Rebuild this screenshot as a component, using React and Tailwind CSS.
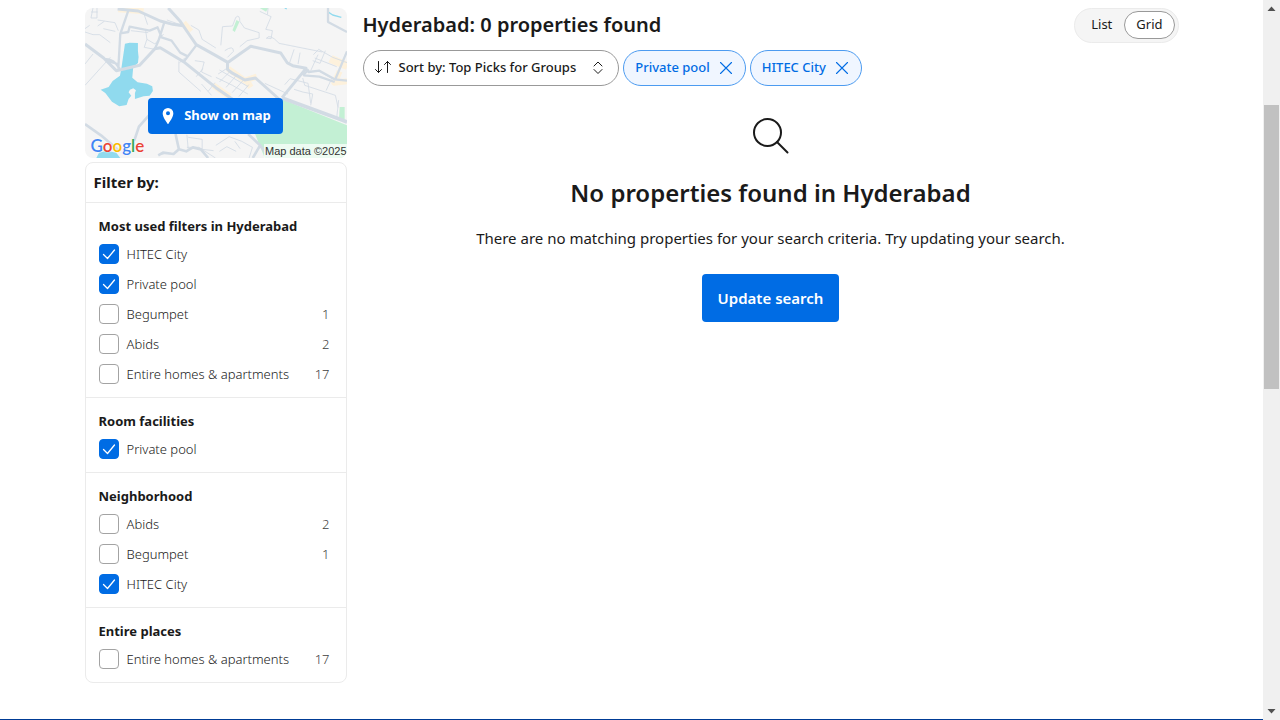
import React, { useState } from "react";

const FILTERS = [
  {
    title: "Most used filters in Hyderabad",
    items: [
      { name: "HITEC City", on: true },
      { name: "Private pool", on: true },
      { name: "Begumpet", count: 1 },
      { name: "Abids", count: 2 },
      { name: "Entire homes & apartments", count: 17 },
    ],
  },
  { title: "Room facilities", items: [{ name: "Private pool", on: true }] },
  {
    title: "Neighborhood",
    items: [
      { name: "Abids", count: 2 },
      { name: "Begumpet", count: 1 },
      { name: "HITEC City", on: true },
    ],
  },
  { title: "Entire places", items: [{ name: "Entire homes & apartments", count: 17 }] },
];

function MapDrawing() {
  return (
    <svg
      viewBox="0 0 787 450"
      preserveAspectRatio="none"
      className="col-start-1 row-start-1 h-full w-full"
      fill="none"
      strokeLinejoin="round"
      aria-hidden="true"
    >
      <rect width="787" height="450" fill="#f5f5f5" />
      <path
        d="M296 44l22 26M100 4l76 6M430 182l50 36 36-12M486 218l12 20M385 232l50 34M735 155l52 22M765 190l-16 34 38-4M740 150l47 20"
        stroke="#fdf1dc"
        strokeWidth="18"
      />
      <path d="M592 274l195 78v98H540l-30-74h70l15-14z" fill="#c3f0d4" />
      <path d="M765 297h15v36h-17zM455 36l9 5-14 31-7-5zM525 0h25l-6 11z" fill="#c3f0d4" />
      <path
        d="M120 107l14-3 25 1v24l2 18-2 18-14 12-3 32 16 14 28 4 16 8 2 14-10 14-18 2-26 8v-18l3-8-8-6-10 4-4 8 8 10-8 10-6 18-22 4-22-14-20-26-14-10 24-8 12-18 22-16 4-20zM34 450l8-16 24-6 28 6 12 16z"
        fill="#90daee"
      />
      <path d="M732 13l12 8 26 7M600 0l6 3" stroke="#90daee" strokeWidth="4" />
      <g stroke="#d2dbe4" strokeWidth="2.5">
        <path d="M24 0l-6 30h18V0M18 12h20M0 62l14-10M38 36l52 8 10 24M58 40l-20 14M0 72l24 8 20 0 32 24M55 62l36 8M0 232l76-84M24 138L0 168M138 68l52 6M182 66l4 28 24 14 26-30M186 94l-8 24 32 6M176 14l12 36M282 160v32l66 58M300 150l-16 14M330 158l28 4-8 30 30 14M354 182l-20 24M286 50l-40-14M318 52l24 14 10 28 41 26" />
        <path d="M408 112l5-56 30-2 10-26q12-10 12 12l14 20 44 14 0 16-36 8-22 18M420 128q26-18 26 2l-18 18M525 10l34 16-16 38 20 4-4 24-14-2M550 0l-2 20M545 92q8-18 38 14l130 26M628 124l-14 42M646 134l-6 34M686 140l16-16 42 24 43 16M700 140l-22 48M722 128l-16 38-22-8M690 150l66 26" />
        <path d="M400 198l28-18M404 222l34-34M424 238l34-40M442 254l34-38M462 266l30-36M393 208l50 24 46 26M404 186l86 50M370 250l20-26M350 228l30 34M540 226l70 32M600 230l16-18 54 14 8 60M654 210l6 22 92 30 8 36M628 244l26 8 30 6-6 34M740 214l-16 34M762 276l-6 54M700 188l50 28" />
        <path d="M310 388l42 6 0 30 34 4M306 418h36l50 32M393 412l40-26 38 14 32 18-10 32M404 430l22-14 28 14M306 380l4 42M220 440l16-2M450 400l16 22" />
      </g>
      <g stroke="#d2dbe4">
        <path d="M0 108l56 42 38 38 70-16 46-50 16-3 70 42 97 78 70 48" strokeWidth="9" />
        <path d="M98 3l62 6 66 30 38 10 30 4M250 0l36 40 30 44 18 26 58 32 38 22" strokeWidth="9" />
        <path d="M428 164l40-28 30-21 90 20 20 30 16 8 40 8-72 88M428 164v20l12 10 40 22 32-6 74 66" strokeWidth="9" />
        <path d="M130 8l-24 70-6 104M106 76l24-4 4-16 60 12 24-10 12 30 30 10 26 36 24 12M238 44l-18 56-10 22M334 112l-38 50M60 154q24-4 44 28M64 158l34 10 4 16" strokeWidth="7" />
        <path d="M730 0v42l57 30M787 130l-36 86M658 182l14 10 32-4 46 26 37 4M656 202l48 4 46 16M672 184l-18 18" strokeWidth="7" />
        <path d="M592 270l76 28 98 36 21 8" strokeWidth="11" />
        <path d="M0 348l48 34 56 48M192 322l-30 34-14 42M272 378l10 46M220 442l14-8 32 4 16-14 22 6 20-12 24 6 22 26M490 378l36 34-22 38M524 410l30 38" strokeWidth="8" />
      </g>
    </svg>
  );
}

function MapCard() {
  return (
    <div className="grid h-[150px] overflow-hidden rounded-lg">
      <MapDrawing />
      <div className="col-start-1 row-start-1 flex items-end justify-between">
        <span className="pl-1.5 font-['Lato','Liberation_Sans',sans-serif] text-[17px] leading-6 font-semibold text-[#4285f4] [text-shadow:0_0_2px_white]">
          G<span className="text-[#ea4335]">o</span>
          <span className="text-[#fbbc05]">o</span>g<span className="text-[#34a853]">l</span>
          <span className="text-[#ea4335]">e</span>
        </span>
        <span className="bg-white/70 pl-px font-['Liberation_Sans',Arial,sans-serif] text-[11px] leading-[14px] text-[#333]">
          Map data ©2025
        </span>
      </div>
      <button
        type="button"
        className="z-10 col-start-1 row-start-1 mb-6 flex h-9 items-center gap-2 self-end justify-self-center rounded bg-[#006ce4] px-3 text-[13px] font-bold text-white"
      >
        <svg viewBox="0 0 24 24" className="h-4 w-4" fill="currentColor" aria-hidden="true">
          <path
            fillRule="evenodd"
            d="M12 0a8 8 0 0 0-8 8c0 6 5.500 12.500 7.300 15.600.300.500 1.100.500 1.400 0C14.500 20.500 20 14 20 8a8 8 0 0 0-8-8zm0 5a3 3 0 1 1 0 6 3 3 0 0 1 0-6z"
          />
        </svg>
        Show on map
      </button>
    </div>
  );
}

function FilterRow({ item }) {
  const [on, setOn] = useState(!!item.on);
  return (
    <label className="flex h-7 items-center gap-2 text-[13px] leading-5 font-light">
      <span className="grid h-5 w-5 shrink-0">
        <input
          type="checkbox"
          checked={on}
          onChange={() => setOn(!on)}
          className="col-start-1 row-start-1 h-5 w-5 appearance-none rounded border border-[#a3a3a3] bg-white checked:border-[#006ce4] checked:bg-[#006ce4]"
        />
        {on && (
          <svg
            viewBox="0 0 20 20"
            className="pointer-events-none z-10 col-start-1 row-start-1 h-5 w-5"
            fill="none"
            stroke="white"
            strokeWidth="1.3"
            strokeLinecap="round"
            strokeLinejoin="round"
            aria-hidden="true"
          >
            <path d="M4.500 10.500l4 4L15.500 6" />
          </svg>
        )}
      </span>
      <span className="grow">{item.name}</span>
      {item.count && <span className="text-[#404040]">{item.count}</span>}
    </label>
  );
}

function FilterSection({ section }) {
  return (
    <fieldset className="border-t border-[#ebebeb] pt-[13px] pr-4 pb-[9px] pl-[13px]">
      <h3 className="mb-1 text-[13px] leading-5 font-bold">{section.title}</h3>
      <div className="flex flex-col gap-0.5">
        {section.items.map((item) => (
          <FilterRow key={item.name} item={item} />
        ))}
      </div>
    </fieldset>
  );
}

function Chip({ children }) {
  return (
    <button
      type="button"
      className="flex h-9 items-center gap-2 rounded-full border border-[#4c9bf0] bg-[#f0f6ff] px-[11px] text-[13px] font-medium text-[#006ce4]"
    >
      {children}
      <svg viewBox="0 0 16 16" className="h-4 w-4" stroke="currentColor" strokeWidth="1.1" strokeLinecap="round" aria-hidden="true">
        <path d="M2.500 2.500l11 11M13.500 2.500l-11 11" />
      </svg>
    </button>
  );
}

function ViewSwitch() {
  const [view, setView] = useState("Grid");
  return (
    <div role="radiogroup" aria-label="View" className="flex h-[35px] items-center rounded-full border border-[#ebebeb] bg-[#f5f5f5] pr-[3px] pl-1 text-[13px]">
      {["List", "Grid"].map((name) => (
        <label
          key={name}
          className="relative flex h-7 items-center rounded-full border border-transparent px-[11px] has-checked:border-[#999] has-checked:bg-white"
        >
          <input
            type="radio"
            name="view"
            checked={view === name}
            onChange={() => setView(name)}
            className="sr-only"
          />
          {name}
        </label>
      ))}
    </div>
  );
}

function ScrollRail() {
  return (
    <div aria-hidden="true" className="flex w-[17px] shrink-0 flex-col items-center bg-[#f0f0f0]">
      <svg viewBox="0 0 17 17" className="h-[17px] w-[17px]" fill="#505050">
        <path d="M4.500 11h8l-4-4.500z" />
      </svg>
      <div className="grow-[88]" />
      <div className="w-[15px] grow-[284] bg-[#c1c1c1]" />
      <div className="grow-[314]" />
      <svg viewBox="0 0 17 17" className="h-[17px] w-[17px]" fill="#505050">
        <path d="M4.500 6h8l-4 4.500z" />
      </svg>
    </div>
  );
}

export default function App() {
  return (
    <div className="flex min-h-screen bg-white font-['Noto_Sans','Open_Sans',sans-serif] text-[#1a1a1a]">
      <div className="flex min-w-0 grow flex-col">
        <div className="mx-auto flex w-full max-w-[1094px] grow gap-4 pt-2">
          <aside className="flex w-[262px] shrink-0 flex-col gap-1">
            <MapCard />
            <div className="rounded-lg border border-[#ebebeb]">
              <h2 className="flex h-[39px] items-center px-2 text-[15px] font-bold">Filter by:</h2>
              {FILTERS.map((section) => (
                <FilterSection key={section.title} section={section} />
              ))}
            </div>
          </aside>
          <main className="min-w-0 grow">
            <div className="flex h-[34px] items-center justify-between">
              <h1 className="text-xl font-semibold">Hyderabad: 0 properties found</h1>
              <ViewSwitch />
            </div>
            <div className="mt-2 flex gap-1">
              <button
                type="button"
                className="flex h-9 items-center gap-2 rounded-full border border-[#999] pr-3 pl-[11px] text-[13px] font-medium"
              >
                <svg viewBox="0 0 16 16" className="h-4 w-4" fill="none" stroke="currentColor" strokeWidth="1" strokeLinecap="round" strokeLinejoin="round" aria-hidden="true">
                  <path d="M3.500 1.500v11M.500 9.500L3.500 12.500l3-3M12.500 12.500V1.500M9.500 4.500l3-3 3 3" />
                </svg>
                Sort by: Top Picks for Groups
                <svg viewBox="0 0 16 16" className="ml-1.5 h-4 w-4" fill="none" stroke="currentColor" strokeWidth="1" strokeLinecap="round" strokeLinejoin="round" aria-hidden="true">
                  <path d="M4 6l4-4 4 4M4 9.500l4 4 4-4" />
                </svg>
              </button>
              <Chip>Private pool</Chip>
              <Chip>HITEC City</Chip>
            </div>
            <section className="flex flex-col items-center pt-8 text-center">
              <svg viewBox="0 0 36 36" className="h-9 w-9" fill="none" stroke="currentColor" strokeWidth="2" strokeLinecap="round" aria-hidden="true">
                <circle cx="14.500" cy="14.500" r="13.500" />
                <path d="M24 24l10.500 10.500" />
              </svg>
              <h2 className="mt-[23px] text-2xl leading-8 font-semibold">No properties found in Hyderabad</h2>
              <p className="mt-[17px] text-[15px] leading-6">
                There are no matching properties for your search criteria. Try updating your search.
              </p>
              <button type="button" className="mt-6 h-12 rounded bg-[#006ce4] px-4 text-[15px] font-semibold text-white">
                Update search
              </button>
            </section>
          </main>
        </div>
        <footer className="h-px bg-[#003b95]" />
      </div>
      <ScrollRail />
    </div>
  );
}
